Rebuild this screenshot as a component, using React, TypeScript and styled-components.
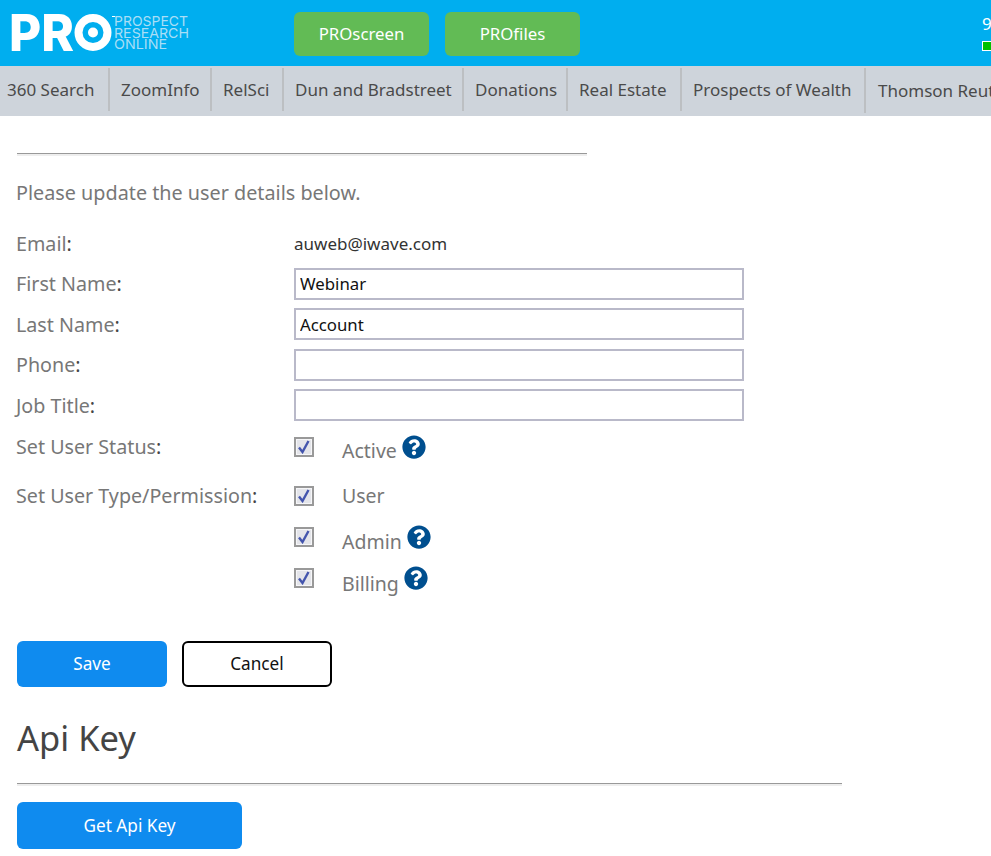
import React from 'react'
import styled, { createGlobalStyle } from 'styled-components'
import { FaQuestionCircle } from 'react-icons/fa'

const GlobalStyle = createGlobalStyle`
  html, body {
    margin: 0;
    padding: 0;
    background: #fff;
    overflow: hidden;
  }
  body {
    font-family: "Noto Sans", "Open Sans", sans-serif;
  }
`

const Page = styled.div`
  width: 991px;
  height: 856px;
  overflow: hidden;
`

const Header = styled.header`
  display: flex;
  height: 66px;
  background: #00aeef;
  padding-left: 10px;
  box-sizing: border-box;
`

const LogoBox = styled.div`
  width: 284px;
  flex: none;
  padding-top: 13px;
`

const AppButtons = styled.div`
  display: flex;
  gap: 16px;
  padding-top: 12px;
`

const AppButton = styled.a`
  display: flex;
  align-items: center;
  justify-content: center;
  box-sizing: border-box;
  width: 135px;
  height: 44px;
  padding-bottom: 1px;
  border-radius: 6px;
  background: #62bb55;
  color: #fff;
  font-size: 16.8px;
`

const Quota = styled.div`
  margin-left: auto;
  width: 9px;
  padding-top: 13px;
  color: #fff;
  font-size: 17px;
  line-height: 22px;
  overflow: hidden;
`

const QuotaBar = styled.div`
  width: 20px;
  height: 10px;
  margin-top: 6px;
  box-sizing: border-box;
  border: 1px solid #fff;
  background: #00c000;
`

const Nav = styled.nav`
  display: flex;
  height: 50px;
  background: #ced4db;
  overflow: hidden;
`

const Tab = styled.a<{ $width: number; $tall?: boolean; $low?: boolean }>`
  flex: none;
  display: flex;
  align-items: center;
  box-sizing: border-box;
  width: ${({ $width }) => $width}px;
  height: ${({ $tall, $low }) => ($tall ? 45 : $low ? 46 : 43)}px;
  margin-top: 2px;
  padding-left: ${({ $low }) => ($low ? 12 : 11)}px;
  padding-bottom: ${({ $tall }) => ($tall ? 3 : 1)}px;
  border-right: 2px solid #bcbfc2;
  color: #4a4a4a;
  font-size: 17px;
  white-space: nowrap;

  &:first-child {
    padding-left: 7px;
  }
  &:last-child {
    border-right: 0;
  }
`

const Content = styled.main`
  padding: 37px 0 0 17px;
`

const Rule = styled.hr<{ $width: number }>`
  width: ${({ $width }) => $width}px;
  height: 2px;
  margin: 0;
  border: 0;
  border-top: 1px solid #999;
  background: #eee;
`

const Intro = styled.p`
  margin: 23px 0 0 -1px;
  color: #777;
  font-size: 19.8px;
  line-height: 28px;
`

const FormRows = styled.div`
  display: grid;
  grid-template-columns: 277px 450px;
  grid-auto-rows: 40.5px;
  align-items: center;
  margin-top: 16px;
`

const Label = styled.label`
  margin-left: -1px;
  color: #777;
  font-size: 19.7px;
  b {
    font-weight: 400;
    color: #444;
  }
`

const Value = styled.span`
  color: #333;
  font-size: 17px;
`

const TextInput = styled.input`
  box-sizing: border-box;
  width: 450px;
  height: 32px;
  padding: 0 4px;
  border: 2px solid #b9b9c9;
  background: #fff;
  color: #111;
  font-family: inherit;
  font-size: 16.8px;
  outline: none;
`

const Options = styled.div`
  display: grid;
  grid-template-columns: 277px 1fr;
  margin-top: 11px;
`

const OptionRow = styled.div<{ $height: number }>`
  display: flex;
  align-items: flex-start;
  height: ${({ $height }) => $height}px;
`

const OptionLabel = styled.label`
  margin-left: -1px;
  color: #777;
  font-size: 19.7px;
  line-height: 20px;
  b {
    font-weight: 400;
    color: #444;
  }
`

const Box = styled.span`
  flex: none;
  display: flex;
  align-items: center;
  justify-content: center;
  box-sizing: border-box;
  width: 20px;
  height: 20px;
  border: 2px solid #999;
  background: #e4e5ea;
  box-shadow: inset 0 0 0 1px #f6f6f8;
  color: #4455ad;
`

const OptionText = styled.span<{ $offset: number }>`
  margin: ${({ $offset }) => $offset}px 0 0 28px;
  color: #777;
  font-size: 19.5px;
  line-height: 26px;
`

const Help = styled.span`
  display: flex;
  margin: -2px 0 0 5px;
  color: #004f8f;
  font-size: 24px;
`

const Actions = styled.div`
  display: flex;
  gap: 15px;
  margin-top: 32px;
`

const Button = styled.button<{ $width: number; $height?: number; $outline?: boolean }>`
  box-sizing: border-box;
  width: ${({ $width }) => $width}px;
  height: ${({ $height }) => $height ?? 46}px;
  border-radius: 6px;
  border: ${({ $outline }) => ($outline ? '2px solid #000' : '0')};
  background: ${({ $outline }) => ($outline ? '#fff' : '#0f8bef')};
  color: ${({ $outline }) => ($outline ? '#111' : '#fff')};
  font-family: inherit;
  font-size: 17.2px;
  padding: 0;
`

const Heading = styled.h2`
  margin: 26px 0 20px;
  color: #444;
  font-size: 34.5px;
  font-weight: 400;
  line-height: 50px;
`

const ApiAction = styled.div`
  margin-top: 16px;
`

const Logo = () => (
  <svg width="180" height="40" viewBox="0 0 180 40">
    <text
      x="-1"
      y="38"
      fill="#fff"
      fontFamily="Inter, sans-serif"
      fontWeight="800"
      fontSize="51"
      textLength="65"
      lengthAdjust="spacingAndGlyphs"
    >
      PR
    </text>
    <circle cx="83" cy="19.5" r="14.5" fill="none" stroke="#fff" strokeWidth="8" />
    <circle cx="83" cy="19.5" r="5" fill="#fff" />
    <rect x="102" y="3" width="3" height="1" fill="#fff" />
    <g fill="#a9def6" fontFamily="Inter, sans-serif" fontSize="13.75">
      <text x="104" y="13" textLength="74" lengthAdjust="spacingAndGlyphs">PROSPECT</text>
      <text x="104" y="25" textLength="75" lengthAdjust="spacingAndGlyphs">RESEARCH</text>
      <text x="104" y="36" textLength="53" lengthAdjust="spacingAndGlyphs">ONLINE</text>
    </g>
  </svg>
)

const Check = () => (
  <Box>
    <svg width="14" height="14" viewBox="0 0 14 14">
      <path d="M2 7.5 L5.5 12 L11.5 1" fill="none" stroke="currentColor" strokeWidth="2.4" />
    </svg>
  </Box>
)

const tabs: Array<[string, number]> = [
  ['360 Search', 110],
  ['ZoomInfo', 102],
  ['RelSci', 72],
  ['Dun and Bradstreet', 180],
  ['Donations', 104],
  ['Real Estate', 114],
]

const fields = [
  { label: 'First Name', value: 'Webinar' },
  { label: 'Last Name', value: 'Account' },
  { label: 'Phone', value: '' },
  { label: 'Job Title', value: '' },
]

const App: React.FC = () => (
  <Page>
    <GlobalStyle />
    <Header>
      <LogoBox>
        <Logo />
      </LogoBox>
      <AppButtons>
        <AppButton>PROscreen</AppButton>
        <AppButton>PROfiles</AppButton>
      </AppButtons>
      <Quota>
        9<QuotaBar />
      </Quota>
    </Header>
    <Nav>
      {tabs.map(([name, width]) => (
        <Tab key={name} $width={width}>
          {name}
        </Tab>
      ))}
      <Tab $width={184} $tall>
        Prospects of Wealth
      </Tab>
      <Tab $width={160} $low>
        Thomson Reuters
      </Tab>
    </Nav>
    <Content>
      <Rule $width={570} />
      <Intro>Please update the user details below.</Intro>
      <FormRows>
        <Label>
          Email<b>:</b>
        </Label>
        <Value>auweb@iwave.com</Value>
        {fields.map((f) => (
          <React.Fragment key={f.label}>
            <Label>
              {f.label}
              <b>:</b>
            </Label>
            <TextInput defaultValue={f.value} />
          </React.Fragment>
        ))}
      </FormRows>
      <Options>
        <OptionLabel>
          Set User Status<b>:</b>
        </OptionLabel>
        <OptionRow $height={49}>
          <Check />
          <OptionText $offset={1}>Active</OptionText>
          <Help>
            <FaQuestionCircle />
          </Help>
        </OptionRow>
        <OptionLabel>
          Set User Type/Permission<b>:</b>
        </OptionLabel>
        <div>
          <OptionRow $height={41}>
            <Check />
            <OptionText $offset={-3}>User</OptionText>
          </OptionRow>
          <OptionRow $height={41}>
            <Check />
            <OptionText $offset={2}>Admin</OptionText>
            <Help>
              <FaQuestionCircle />
            </Help>
          </OptionRow>
          <OptionRow $height={41}>
            <Check />
            <OptionText $offset={3}>Billing</OptionText>
            <Help>
              <FaQuestionCircle />
            </Help>
          </OptionRow>
        </div>
      </Options>
      <Actions>
        <Button $width={150}>Save</Button>
        <Button $width={150} $outline>
          Cancel
        </Button>
      </Actions>
      <Heading>Api Key</Heading>
      <Rule $width={825} />
      <ApiAction>
        <Button $width={225} $height={47}>
          Get Api Key
        </Button>
      </ApiAction>
    </Content>
  </Page>
)

export default App
